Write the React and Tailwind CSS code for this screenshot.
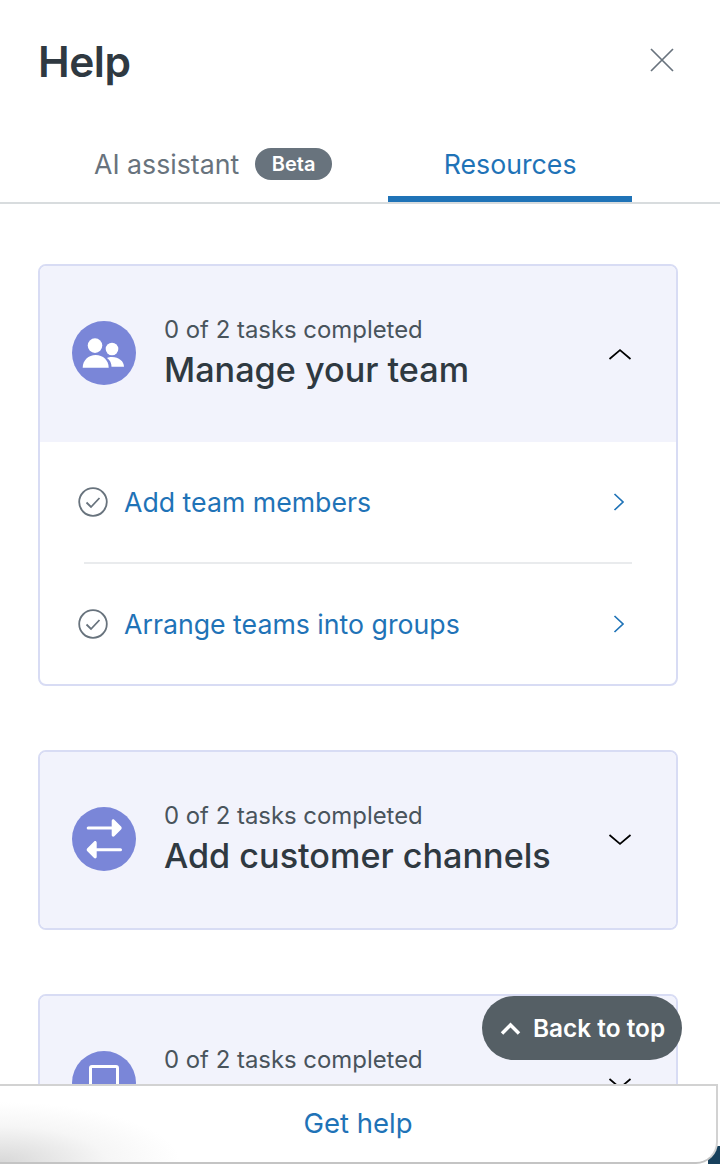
const PeopleIcon = () => (
  <svg width="64" height="64" viewBox="0 0 64 64" fill="#fff">
    <circle cx="23" cy="24.600" r="7.300" />
    <circle cx="40" cy="28" r="6.300" />
    <path d="M10.700 46.700c0-7.500 5.800-12.700 13-12.700s13 5.200 13 12.700z" />
    <path d="M35 37c1.500-.7 3-1 5-1 7 0 12 4.500 12 9.700H39.500c0-3.500-1.500-6.500-4.500-8.700z" />
  </svg>
);

const SwapIcon = () => (
  <svg width="64" height="64" viewBox="0 0 64 64" fill="#fff">
    <rect x="14.700" y="19.500" width="27" height="3" rx="1.500" />
    <path d="M39.700 14c0-1.500 1.500-2.200 2.600-1.300l6.500 6.500c1.200 1.100 1.200 2.500 0 3.600l-6.500 6.500c-1.100.9-2.600.2-2.600-1.300z" />
    <rect x="23" y="41.200" width="27" height="3" rx="1.500" />
    <path d="M24.700 35.700c0-1.500-1.500-2.200-2.600-1.300l-6.500 6.500c-1.200 1.100-1.200 2.500 0 3.600l6.500 6.500c1.100.9 2.600.2 2.600-1.300z" />
  </svg>
);

const CheckCircle = () => (
  <svg width="30" height="30" viewBox="0 0 30 30" fill="none" stroke="#68737d" className="shrink-0">
    <circle cx="15" cy="15" r="13.800" strokeWidth="1.800" />
    <path d="M8.500 15.500l4.500 4.500 8.500-9" strokeWidth="1.800" />
  </svg>
);

const Task = ({ title }) => (
  <div className="flex items-center h-[60px] pl-[38px] pr-[51px]">
    <CheckCircle />
    <span className="ml-[16px] text-[26.700px] text-[#1f73b7]">{title}</span>
    <svg width="12" height="18" viewBox="0 0 12 18" fill="none" stroke="#1f73b7" strokeWidth="1.700" className="ml-auto">
      <path d="M1.500 1l8.500 8-8.500 8" />
    </svg>
  </div>
);

const CardChevron = ({ open }) => (
  <svg width="24" height="12" viewBox="0 0 24 12" fill="none" stroke="#000" strokeWidth="1.700" className="ml-auto">
    <path d={open ? "M1.500 11L12 2l10.500 9" : "M1.500 1L12 10l10.500-9"} />
  </svg>
);

const CardHeader = ({ icon, title, open }) => (
  <div className="flex items-center bg-[#f2f3fc] h-[176px] pl-[32px] pr-[44px]">
    <div className="flex items-center justify-center w-[64px] h-[64px] mb-[2px] rounded-full bg-[#7a86d8] shrink-0">
      {icon}
    </div>
    <div className="ml-[28px] mt-[4px]">
      <div className="text-[23.900px] leading-[28px] text-[#49545c]">0 of 2 tasks completed</div>
      <div className="text-[34.200px] leading-[52px] font-medium text-[#2f3941]">{title}</div>
    </div>
    <CardChevron open={open} />
  </div>
);

export default function App() {
  return (
    <div className="relative w-[720px] h-[1164px] overflow-hidden bg-white font-['Inter',sans-serif]">
      <div className="flex items-start justify-between h-[126px] pl-[38px] pr-[46px] pt-[36px]">
        <h1 className="text-[42.500px] leading-[52px] font-semibold tracking-[-0.5px] text-[#2f3941]">Help</h1>
        <svg width="24" height="24" viewBox="0 0 24 24" fill="none" stroke="#68737d" strokeWidth="1.700" className="mt-[12px]">
          <path d="M1 1l22 22M23 1L1 23" />
        </svg>
      </div>

      <div className="flex h-[78px] border-b-2 border-[#d8dcde] pl-[94px]">
        <div className="flex items-center h-[76px]">
          <span className="text-[26.700px] text-[#68737d]">AI assistant</span>
          <span className="ml-[16px] flex items-center justify-center w-[77px] h-[32px] rounded-full bg-[#68737d] text-[20px] font-semibold text-white">
            Beta
          </span>
        </div>
        <div className="flex items-center justify-center ml-[56px] w-[244px] h-[76px] pt-[6px] border-b-[6px] border-[#1f73b7] text-[26.700px] text-[#1f73b7]">
          Resources
        </div>
      </div>

      <div className="flex flex-col gap-[64px] ml-[38px] mr-[42px] mt-[60px]">
        <div className="border-2 border-[#d8dcf4] rounded-[8px] overflow-hidden">
          <CardHeader icon={<PeopleIcon />} title="Manage your team" open />
          <div className="py-[30px]">
            <Task title="Add team members" />
            <div className="h-[2px] bg-[#e9ebed] mx-[44px] my-[30px]" />
            <Task title="Arrange teams into groups" />
          </div>
        </div>

        <div className="border-2 border-[#d8dcf4] rounded-[8px] overflow-hidden">
          <CardHeader icon={<SwapIcon />} title="Add customer channels" />
        </div>

        <div className="border-2 border-[#d8dcf4] rounded-[8px] overflow-hidden">
          <CardHeader
            icon={<div className="w-[30px] h-[36px] border-[3px] border-white rounded-[3px]" />}
            title="Explore"
          />
        </div>
      </div>

      <button className="absolute left-[482px] top-[996px] flex items-center w-[200px] h-[64px] pl-[18px] rounded-full bg-[#555f65] text-[24.400px] font-semibold text-white">
        <svg width="21" height="13" viewBox="0 0 21 13" fill="none" stroke="#fff" strokeWidth="3.500">
          <path d="M2 11.500l8.500-8.500 8.500 8.500" />
        </svg>
        <span className="ml-[12px]">Back to top</span>
      </button>

      <div className="absolute left-0 top-[1084px] w-[720px] h-[80px] bg-white">
        <div className="absolute right-0 bottom-0 w-[12px] h-[18px] rounded-tl-[10px] bg-[#17405c]" />
        <div className="relative flex items-center justify-center w-[718px] h-[80px] border-2 border-[#d2d2d2] border-b-[#c4c4c4] border-l-0 rounded-br-[22px] bg-[radial-gradient(ellipse_180px_60px_at_0%_100%,#d8d8d8,#f6f6f6_60%,#ffffff)] text-[27.500px] text-[#1f73b7]">
          Get help
        </div>
      </div>
    </div>
  );
}
